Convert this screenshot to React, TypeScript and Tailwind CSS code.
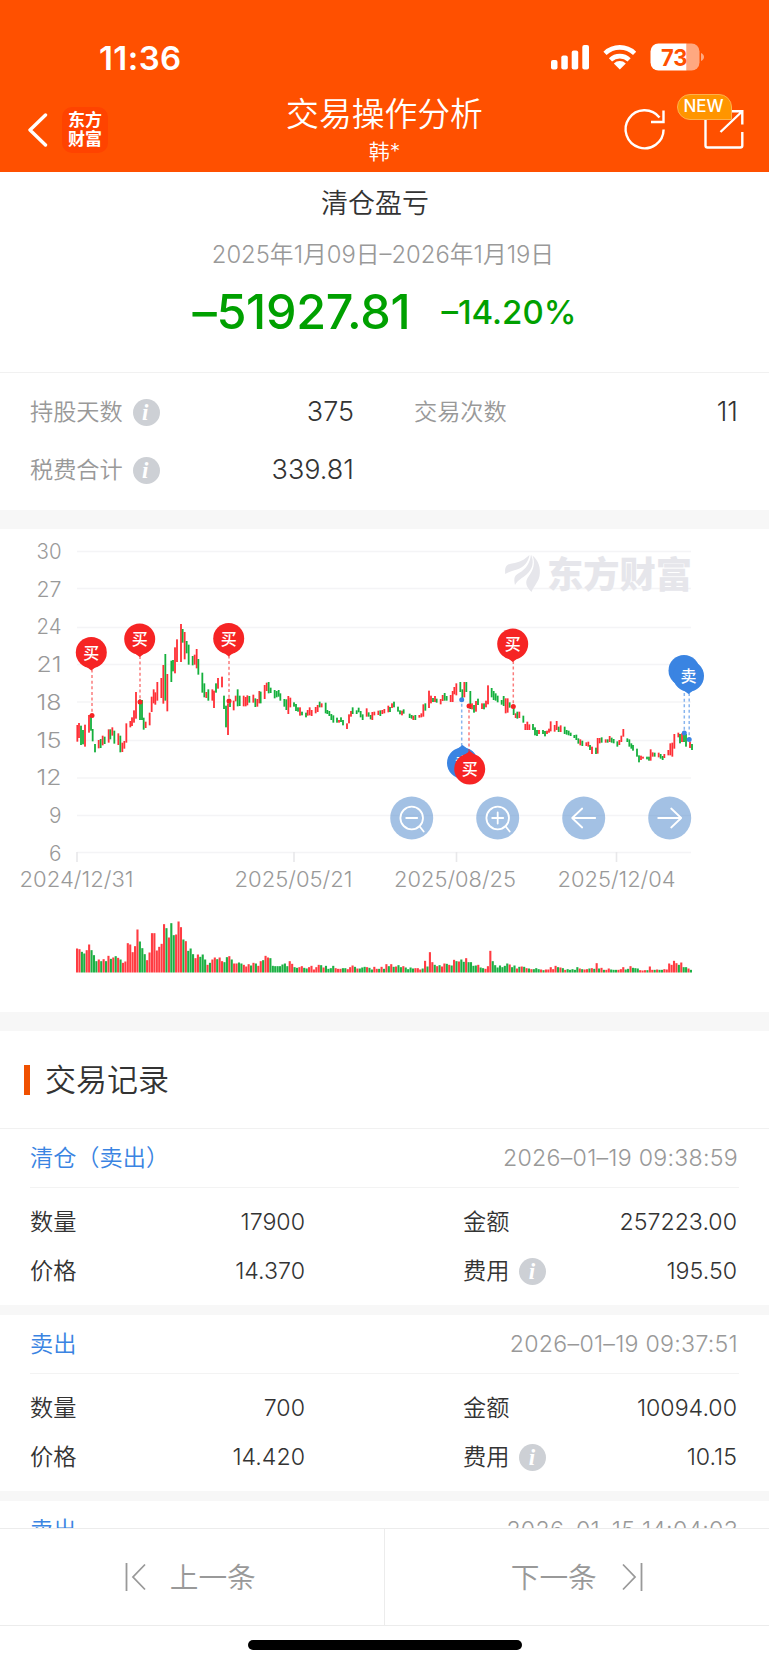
import React from 'react';

type Mark = [number, number, number, 0 | 1];

// One entry per trading day: [x, top, bottom, up] in thirds of a pixel.
const CANDLES: Mark[] = [
  [232,585,635,1],[237,579,624,1],[243,587,645,0],[249,600,643,0],[255,584,650,1],[267,555,608,1],[273,560,602,0],[278,597,634,0],[285,642,667,0],
  [296,630,655,1],[302,627,654,0],[308,617,646,1],[314,620,642,0],[326,598,638,1],[331,598,628,0],[337,592,617,1],[343,602,641,0],[355,610,645,1],
  [361,617,667,0],[367,638,666,1],[373,633,656,1],[379,580,638,1],[391,573,592,1],[396,562,588,1],[402,541,578,1],[408,486,566,1],[420,508,570,0],
  [426,510,570,0],[431,563,599,0],[437,575,594,1],[449,548,586,1],[455,500,546,1],[461,478,520,1],[466,487,524,1],[472,456,512,1],[484,444,504,1],
  [490,405,521,1],[496,372,512,0],[502,432,544,1],[514,392,456,0],[519,390,424,0],[525,352,430,1],[531,328,396,1],[543,282,396,1],[548,297,338,0],
  [554,306,388,1],[560,333,370,0],[566,344,404,0],[578,378,406,0],[584,374,404,1],[590,357,415,1],[595,387,434,0],[607,428,488,0],[613,460,502,0],
  [619,486,504,1],[625,478,512,0],[637,478,512,1],[642,482,534,1],[648,460,488,0],[654,444,476,1],[666,440,472,1],[672,497,537,0],[678,527,592,0],
  [684,520,615,1],[690,517,531,0],[701,512,541,1],[707,497,514,1],[713,478,529,0],[719,497,528,0],[731,497,529,1],[737,501,529,1],[742,496,526,1],
  [748,498,518,0],[760,494,518,1],[766,505,531,0],[772,507,530,1],[778,483,520,1],[782,485,520,0],[794,465,507,1],[800,458,483,1],[806,456,490,0],
  [812,473,489,0],[824,480,505,0],[830,483,502,0],[836,480,500,0],[841,490,512,0],[853,507,530,0],[859,508,540,0],[865,498,552,1],[871,503,532,1],
  [882,517,530,0],[888,522,543,0],[894,532,545,0],[900,532,557,1],[906,545,556,0],[918,548,562,0],[923,540,557,1],[929,532,556,1],[935,540,558,1],
  [947,531,550,1],[953,525,546,1],[959,515,532,0],[965,520,532,1],[977,518,550,0],[982,540,552,0],[988,543,558,0],[994,552,570,0],[1000,556,578,0],
  [1011,563,578,0],[1017,570,578,1],[1023,562,576,0],[1029,570,586,0],[1041,580,597,1],[1047,553,580,1],[1053,543,560,1],[1058,532,552,0],[1070,541,552,0],
  [1076,533,547,0],[1082,543,562,0],[1088,553,570,0],[1100,535,560,1],[1106,547,560,0],[1112,555,568,0],[1117,546,570,1],[1123,545,556,1],[1135,542,555,1],
  [1141,541,558,0],[1147,540,552,1],[1153,537,550,1],[1165,527,547,1],[1170,531,546,0],[1176,520,534,1],[1182,515,532,0],[1194,530,545,0],[1200,541,553,0],
  [1206,542,556,1],[1211,538,551,0],[1229,551,564,0],[1235,555,566,0],[1240,557,570,1],[1246,555,570,0],[1258,555,563,1],[1264,550,562,1],[1270,523,560,1],
  [1276,520,542,0],[1287,482,534,1],[1293,497,520,1],[1299,504,516,0],[1305,498,516,1],[1310,506,518,0],[1322,507,523,1],[1328,495,513,1],[1334,489,512,0],
  [1340,498,512,0],[1352,495,516,1],[1358,483,516,1],[1363,471,493,1],[1369,460,496,1],[1381,456,486,0],[1387,478,505,0],[1393,456,502,1],[1399,456,486,0],
  [1411,483,537,0],[1416,520,538,1],[1422,525,548,0],[1428,513,545,1],[1434,506,525,0],[1446,520,537,1],[1452,520,538,0],[1458,512,532,1],[1464,466,523,1],
  [1475,474,502,0],[1481,483,510,0],[1487,490,512,0],[1493,497,517,0],[1505,510,524,0],[1511,498,528,0],[1517,505,550,1],[1523,505,548,1],[1529,517,533,0],
  [1541,533,555,0],[1547,550,564,1],[1552,545,566,0],[1558,545,564,1],[1570,557,578,0],[1576,582,600,1],[1582,575,600,1],[1588,583,600,1],[1599,582,600,0],
  [1605,592,616,0],[1611,600,618,0],[1617,600,612,1],[1629,600,612,0],[1635,603,619,0],[1641,602,612,1],[1647,596,608,1],[1652,574,604,1],[1664,585,605,1],
  [1670,573,600,1],[1676,590,606,0],[1682,586,606,1],[1694,590,612,0],[1700,600,614,0],[1706,602,616,0],[1712,608,618,0],[1723,615,624,0],[1729,614,630,0],
  [1735,625,641,0],[1741,628,646,1],[1747,632,648,0],[1759,637,648,1],[1765,635,650,1],[1770,645,660,0],[1776,650,672,1],[1788,653,672,0],[1793,624,671,1],
  [1799,624,640,1],[1805,622,638,0],[1817,628,638,1],[1823,628,638,0],[1829,618,636,1],[1835,623,638,0],[1841,627,640,0],[1852,634,650,0],[1858,630,645,1],
  [1864,617,636,1],[1870,597,620,1],[1882,625,636,0],[1888,628,650,0],[1894,640,656,0],[1899,645,662,0],[1911,656,680,0],[1917,676,697,0],[1923,677,690,1],
  [1929,680,686,1],[1941,680,688,0],[1947,680,692,0],[1952,658,692,1],[1958,667,680,1],[1964,668,680,0],[1976,668,682,1],[1982,672,686,0],[1988,678,690,0],
  [1993,672,684,1],[2005,660,676,1],[2011,640,676,1],[2017,638,680,1],[2023,612,656,1],[2035,608,622,1],[2040,612,640,0],[2046,610,636,1],[2052,610,636,0],
  [2058,612,650,0],[2070,635,654,1],[2076,642,660,0],
];

// Daily volume; r = rising day, g = falling day, number = height in thirds of a pixel.
const VOLUME =
  'r72 r70 g62 g57 r67 r84 g67 g52 g34 r39 g34 r40 g34 r50 g41 r45 g49 r44 g39 r29 r33 r88 r84 r61 r79 r129 g93 g73 g55 r37 r60 r118 r118 r66 r77 r86 r145 g133 r105 g148 g112 r114 r153 r136 g99 r94 g65 g72 g55 r43 r54 g47 g54 g39 r23 g29 r39 r45 g40 r45 r34 g31 g46 r49 g39 r27 r27 g30 g27 r23 r18 r25 g21 r29 g27 r20 r34 g37 r50 r45 g43 g20 g19 g19 g19 g24 g27 g19 r34 r26 g16 g14 r16 r19 g14 g12 r16 r20 r9 r16 r23 g22 r15 g20 g11 g13 g20 r13 r11 r11 g13 g13 r10 r16 r21 g17 r12 g12 g15 g17 r16 g14 g9 r17 r11 g11 r17 g11 ' +
  'r25 g19 r25 g17 r18 g22 g16 r19 g15 g10 g15 g12 r13 r13 r9 g12 r35 g18 r61 r31 g23 r19 g22 r18 r27 g26 r23 g21 r38 g34 r33 g39 g32 r43 g31 g31 g20 g21 r23 g15 g13 r11 r19 r65 g34 g22 g15 g21 g16 g20 g27 r24 g16 g21 r12 g17 r18 g17 r13 g12 r10 g10 g13 g10 r9 g7 r9 r9 r16 r10 r20 g16 r15 g13 r8 g10 g8 g10 g8 g16 r12 g10 r9 r10 g12 r13 g11 r28 g12 r14 g8 r8 r12 g9 g8 g8 r8 r10 r16 g9 g11 r19 g14 g13 g12 r7 r6 r7 g7 r18 r8 g8 r9 g8 g8 r10 r9 r27 r23 r35 r28 g23 r30 g16 g16 r12 g8';

const DAYS = VOLUME.split(' ');
const DAY_WIDTH = 616.3 / DAYS.length;

const Y_LINES = [551.5, 588.5, 627.5, 664.5, 702, 740.5, 778, 815.5, 852.5];
const Y_LABELS = ['30', '27', '24', '21', '18', '15', '12', '9', '6'];
const X_LABELS: [string, number, number, number][] = [
  ['2024/12/31', 77, 19.5, 114],
  ['2025/05/21', 294, 234.5, 118],
  ['2025/08/25', 456.5, 394, 122],
  ['2025/12/04', 616.5, 557.5, 118],
];

const RED = '#f62424';
const BLUE = '#3a84e2';

function Pin({ x, y, label, dotX, dotY, color, up }: { x: number; y: number; label: string; dotX: number; dotY: number; color: string; up?: boolean }) {
  const s = up ? -1 : 1;
  return (
    <g>
      <line x1={dotX} x2={dotX} y1={y + s * 17} y2={dotY} stroke={color} strokeOpacity="0.6" strokeWidth="1.5" strokeDasharray="3 2.6" />
      <circle cx={dotX} cy={dotY} r="2.5" fill={color} />
      <circle cx={x} cy={y} r="15.5" fill={color} />
      <path d={`M${x - 11} ${y + s * 10.8} Q${x - 4} ${y + s * 14.5} ${x} ${y + s * 18} Q${x + 4} ${y + s * 14.5} ${x + 11} ${y + s * 10.8}Z`} fill={color} />
      <text x={x} y={y + 6} fontSize="16" fontWeight="500" textAnchor="middle" fill="#fff">{label}</text>
    </g>
  );
}

function RoundButton({ x, children }: { x: number; children: React.ReactNode }) {
  return (
    <g transform={`translate(${x} 818)`} fill="none" stroke="#fff" strokeWidth="1.8" strokeLinecap="round" strokeLinejoin="round">
      <circle r="21.5" fill="#4884ca" fillOpacity="0.5" stroke="none" />
      {children}
    </g>
  );
}

function Chart() {
  return (
    <svg className="block h-[483px] w-full" viewBox="0 529 769 483">
      <g stroke="#f4f4f6" strokeWidth="1.4">
        {Y_LINES.map((y) => <line key={y} x1="77" x2="691" y1={y} y2={y} />)}
      </g>
      <g fill="#e6e6eb">
        <path d="M505.2 574C504.6 566.5 506.5 564.3 512 563.4C520 562.5 524.5 559.5 529.5 555C528.5 562 524 567 517 569.5C512 571 509 572 505.2 574Z" />
        <path d="M515 585C513.5 578 514.5 575.5 519 573C526 569 530 563 531 554.5C534.5 562 532.5 569.5 526.5 574.5C521.5 578.5 518 580 515 585Z" />
        <path d="M531.5 592C526 586.5 524.5 582 528.5 576.5C533.5 570 535.5 563 532.5 555.5C538.5 560.5 541 568 539.5 576C538.3 582 534 586 531.5 592Z" />
        <text x="547" y="587.5" fontSize="36.5" fontWeight="800" textLength="145" lengthAdjust="spacingAndGlyphs">东方财富</text>
      </g>
      <g fontSize="21.5" fill="#999">
        {Y_LABELS.map((t, i) => (
          <text key={t} x="61.5" y={559 + i * 37.72} textAnchor="end" textLength={t.length === 2 ? 25 : 12.5} lengthAdjust="spacingAndGlyphs">{t}</text>
        ))}
        {X_LABELS.map(([t, tick, x, w]) => (
          <g key={t}>
            <line x1={tick} x2={tick} y1="852" y2="862" stroke="#e8e8ea" strokeWidth="1.6" />
            <text x={x} y="887" textLength={w} lengthAdjust="spacingAndGlyphs">{t}</text>
          </g>
        ))}
      </g>
      <g>
        {CANDLES.map(([x, t, b, up]) => (
          <rect key={x} x={x / 3 - 0.9} y={530 + t / 3} width="1.8" height={(b - t) / 3} fill={up ? '#ff2f36' : '#14b03c'} />
        ))}
      </g>
      <g>
        {DAYS.map((v, i) => {
          const h = Number(v.slice(1)) / 3;
          return <rect key={i} x={76 + i * DAY_WIDTH} y={972.5 - h} width="2.1" height={h} fill={v[0] === 'r' ? '#ff3c42' : '#1cb044'} />;
        })}
      </g>
      <Pin x={91.3} y={652.5} label="买" dotX={92} dotY={715.5} color={RED} />
      <Pin x={139.7} y={639} label="买" dotX={140} dotY={702} color={RED} />
      <Pin x={228.7} y={638.5} label="买" dotX={229} dotY={701} color={RED} />
      <Pin x={512.7} y={644} label="买" dotX={513.3} dotY={706.5} color={RED} />
      <Pin x={462.5} y={763} label="卖" dotX={461.7} dotY={699.8} color={BLUE} up />
      <Pin x={469.7} y={769} label="买" dotX={469} dotY={706} color={RED} up />
      <Pin x={684} y={670.5} label="卖" dotX={684.3} dotY={733} color={BLUE} />
      <Pin x={688.5} y={676} label="卖" dotX={689.2} dotY={739.5} color={BLUE} />
      <RoundButton x={411.7}>
        <circle r="11.3" />
        <path d="M-5.5 0H5.5M8 8.5L12 13.5" />
      </RoundButton>
      <RoundButton x={497.7}>
        <circle r="11.3" />
        <path d="M-5.5 0H5.5M0 -5.5V5.5M8 8.5L12 13.5" />
      </RoundButton>
      <RoundButton x={583.7}>
        <path d="M11.5 0H-11.5M-1.5 -9.5L-11.5 0L-1.5 9.5" />
      </RoundButton>
      <RoundButton x={669.7}>
        <path d="M-11.5 0H11.5M1.5 -9.5L11.5 0L1.5 9.5" />
      </RoundButton>
    </svg>
  );
}

function Info() {
  return (
    <span className="flex size-[27px] items-center justify-center rounded-full bg-[#cdd0d5] pr-[2px] font-['Liberation_Serif',serif] text-[23px] leading-none font-bold text-white italic">
      i
    </span>
  );
}

function Header() {
  return (
    <header className="h-[172px] bg-[#ff5000] text-white">
      <div className="flex h-[88px] items-end justify-between pr-[64px] pl-[99px]">
        <span className="mb-[14px] text-[33px] leading-[32px] font-semibold tracking-[0.4px]">11:36</span>
        <svg className="mb-[14px] h-[34px] w-[156px]" viewBox="549 40 156 34" fill="#fff">
          <rect x="551" y="60" width="6.5" height="9.5" rx="2" />
          <rect x="561.3" y="55.5" width="6.5" height="14" rx="2" />
          <rect x="571.7" y="50.5" width="6.5" height="19" rx="2" />
          <rect x="582.3" y="45" width="6.7" height="24.5" rx="2" />
          <g fill="none" stroke="#fff" strokeWidth="4.6">
            <path d="M605 53.3A21.5 21.5 0 0 1 634.6 53.3" />
            <path d="M610.5 59.8A13.5 13.5 0 0 1 629.1 59.8" />
          </g>
          <path d="M619.8 69.5L613.8 63.5A8.5 8.5 0 0 1 625.8 63.5Z" />
          <path d="M658.5 43.5H686.5V70.5H658.5A8 8 0 0 1 650.5 62.5V51.5A8 8 0 0 1 658.5 43.5Z" />
          <path d="M686.5 43.5H691.5A8 8 0 0 1 699.5 51.5V62.5A8 8 0 0 1 691.5 70.5H686.5Z" fillOpacity="0.5" />
          <path d="M701 53C705 54.5 705 59.5 701 61Z" fillOpacity="0.5" />
          <text x="661" y="65.5" fontSize="23" fontWeight="700" textLength="26.5" lengthAdjust="spacingAndGlyphs" fill="#ff5000">73</text>
        </svg>
      </div>
      <div className="grid h-[84px] grid-cols-[1fr_auto_1fr] items-center">
        <div className="flex items-center gap-[14px] pl-7">
          <svg className="h-[36px] w-[20px]" viewBox="0 0 20 36" fill="none" stroke="#fff" strokeWidth="3.4" strokeLinecap="round" strokeLinejoin="round">
            <path d="M17.5 3L2 18L17.5 33" />
          </svg>
          <div className="flex size-[46px] flex-col items-center justify-center rounded-[10px] bg-[#ff4300] text-[17px] leading-[19px] font-bold">
            <span>东方</span>
            <span>财富</span>
          </div>
        </div>
        <div className="flex flex-col items-center pt-[2px]">
          <h1 className="text-[32.8px] leading-[42px]">交易操作分析</h1>
          <span className="text-[21px] leading-[34px]">韩*</span>
        </div>
        <div className="relative flex justify-end pr-6">
          <svg className="h-[60px] w-[145px]" viewBox="600 100 145 60" fill="none" stroke="#fff" strokeWidth="2.4">
            <path d="M663.6 129.5A19 19 0 1 1 659.5 117.5" />
            <path d="M663.5 110.5V122H651" />
            <path d="M705.5 118V145.5Q705.5 147.5 707.5 147.5H740.3Q742.3 147.5 742.3 145.5V132M730 111.2H742.3V124.5M742 111.5L720.5 132" />
          </svg>
          <div className="absolute top-[-6px] right-[37px] flex h-[26px] w-[55px] items-center justify-center rounded-[13px] rounded-br-none border border-[#ffb04d] bg-[#ff9500] pr-[2px] text-[17px] font-medium">
            NEW
          </div>
        </div>
      </div>
    </header>
  );
}

function Stat({ label, value, info }: { label: string; value: string; info?: boolean }) {
  return (
    <div className="flex h-[58px] items-center">
      <span className="mr-[10px] text-[23.2px] text-[#999]">{label}</span>
      {info && <Info />}
      <span className="ml-auto text-[27px] text-[#333]">{value}</span>
    </div>
  );
}

type Trade = { kind: string; time: string; qty: string; amount: string; price: string; fee: string };

const TRADES: Trade[] = [
  { kind: '清仓（卖出）', time: '2026–01–19 09:38:59', qty: '17900', amount: '257223.00', price: '14.370', fee: '195.50' },
  { kind: '卖出', time: '2026–01–19 09:37:51', qty: '700', amount: '10094.00', price: '14.420', fee: '10.15' },
  { kind: '卖出', time: '2026–01–15 14:04:03', qty: '500', amount: '7275.00', price: '14.550', fee: '8.64' },
];

function Field({ label, value, info }: { label: string; value: string; info?: boolean }) {
  return (
    <div className="flex h-[49px] items-center">
      <span className="mr-[10px]">{label}</span>
      {info && <Info />}
      <span className="ml-auto">{value}</span>
    </div>
  );
}

function TradeCard({ t }: { t: Trade }) {
  return (
    <article className="border-b-[10px] border-[#f7f7f7] px-[30px] pb-[9px] text-[23.2px] text-[#333]">
      <div className="flex h-[59px] items-center justify-between border-b border-[#f3f3f3] pr-[1px] pt-[1px]">
        <span className="text-[#3a84e2]">{t.kind}</span>
        <span className="tracking-[0.25px] text-[#999]">{t.time}</span>
      </div>
      <div className="grid grid-cols-[275px_274px] justify-between pt-[10px] pr-[2px]">
        <Field label="数量" value={t.qty} />
        <Field label="金额" value={t.amount} />
        <Field label="价格" value={t.price} />
        <Field label="费用" value={t.fee} info />
      </div>
    </article>
  );
}

export default function App() {
  return (
    <div className="flex h-[1665px] w-[769px] flex-col overflow-hidden bg-white font-['Inter','Noto_Sans_CJK_SC',sans-serif] font-[350]">
      <Header />
      <section className="flex h-[201px] shrink-0 flex-col items-center border-b border-[#f1f1f1] pt-[13px]">
        <h2 className="pr-[19px] text-[27px] leading-[38px] text-[#333]">清仓盈亏</h2>
        <p className="mt-[15px] pr-[3px] text-[23.8px] leading-[34px] text-[#999]">2025年1月09日–2026年1月19日</p>
        <div className="mt-[13px] flex items-center gap-[31px] text-[#00a000]">
          <span className="text-[48.5px] leading-[54px] font-[550] tracking-[-0.3px]">–51927.81</span>
          <span className="text-[33px] leading-[54px] font-[550]">–14.20%</span>
        </div>
      </section>
      <section className="grid h-[137px] shrink-0 grid-cols-[324px_324px] content-start justify-between pt-[10px] pr-[31px] pl-[30px]">
        <Stat label="持股天数" value="375" info />
        <Stat label="交易次数" value="11" />
        <Stat label="税费合计" value="339.81" info />
      </section>
      <div className="h-[19px] shrink-0 bg-[#f7f7f7]" />
      <section className="h-[483px] shrink-0">
        <Chart />
      </section>
      <div className="h-[19px] shrink-0 bg-[#f7f7f7]" />
      <main className="h-[497px] shrink-0 overflow-hidden">
        <div className="flex h-[98px] items-center gap-4 border-b border-[#f1f1f1] pl-6">
          <span className="h-[30px] w-[6px] bg-[#f05000]" />
          <h2 className="-ml-px pt-[2px] text-[31px] text-[#333]">交易记录</h2>
        </div>
        {TRADES.map((t) => <TradeCard key={t.time} t={t} />)}
      </main>
      <nav className="grid h-[98px] shrink-0 grid-cols-2 border-y border-[#ececec] text-[28.7px] text-[#999]">
        <div className="flex items-center justify-center gap-[24px] border-r border-[#ececec] pr-[3px]">
          <svg className="h-[30px] w-[21px]" viewBox="0 0 21 30" fill="none" stroke="#999" strokeWidth="1.8">
            <path d="M1.5 1V29M20 2.5L8 15L20 27.5" />
          </svg>
          <span className="pt-px">上一条</span>
        </div>
        <div className="flex items-center justify-center gap-[25px]">
          <span className="pt-px">下一条</span>
          <svg className="h-[30px] w-[21px]" viewBox="0 0 21 30" fill="none" stroke="#999" strokeWidth="1.8">
            <path d="M19.5 1V29M1 2.5L13 15L1 27.5" />
          </svg>
        </div>
      </nav>
      <div className="flex flex-1 justify-center pt-[14px]">
        <span className="h-[10px] w-[274px] rounded-full bg-black" />
      </div>
    </div>
  );
}
